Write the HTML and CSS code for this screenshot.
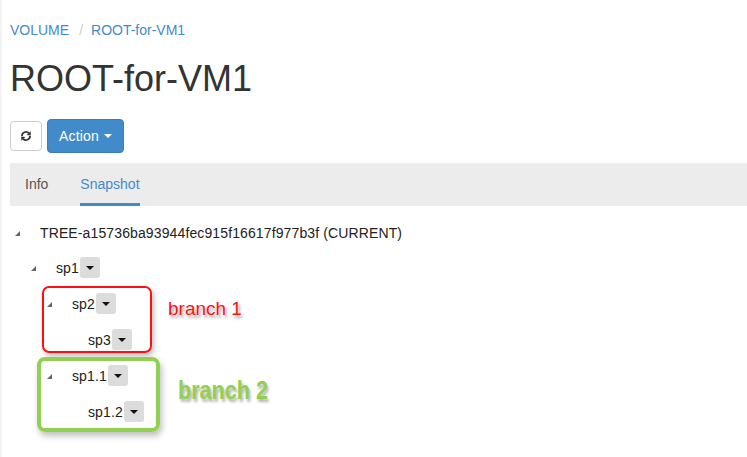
FILE: index.html
```html
<!DOCTYPE html>
<html>
<head>
<meta charset="utf-8">
<link rel="stylesheet" href="styles.css">
</head>
<body>
<div class="page">
  <ol class="breadcrumb">
    <li><a href="#">VOLUME</a></li>
    <li class="sep">/</li>
    <li><a href="#">ROOT-for-VM1</a></li>
  </ol>
  <h1 class="title">ROOT-for-VM1</h1>
  <div class="toolbar">
    <button class="btn btn-refresh" aria-label="refresh">
      <svg width="12" height="12" viewBox="0 0 16 16">
        <path d="M2.6 8 A5.4 5.4 0 0 1 11.9 4.3" fill="none" stroke="#333" stroke-width="2.4"/>
        <polygon points="14.2,1.6 14.4,7.2 8.8,6.6" fill="#333"/>
        <path d="M13.4 8 A5.4 5.4 0 0 1 4.1 11.7" fill="none" stroke="#333" stroke-width="2.4"/>
        <polygon points="1.8,14.4 1.6,8.8 7.2,9.4" fill="#333"/>
      </svg>
    </button>
    <button class="btn btn-action">Action <span class="caret caret-white"></span></button>
  </div>
  <div class="tabs">
    <a class="tab" href="#"><span>Info</span></a>
    <a class="tab active" href="#"><span>Snapshot</span></a>
  </div>
  <ul class="tree">
    <li>
      <div class="row row-root"><span class="toggler"><i></i></span><span class="label">TREE-a15736ba93944fec915f16617f977b3f (CURRENT)</span></div>
      <ul>
        <li>
          <div class="row"><span class="toggler"><i></i></span><span class="label">sp1</span><span class="drop"><span class="caret"></span></span></div>
          <ul>
            <li>
              <div class="row"><span class="toggler"><i></i></span><span class="label">sp2</span><span class="drop"><span class="caret"></span></span></div>
              <ul>
                <li><div class="row"><span class="toggler"></span><span class="label">sp3</span><span class="drop"><span class="caret"></span></span></div></li>
              </ul>
            </li>
            <li>
              <div class="row"><span class="toggler"><i></i></span><span class="label">sp1.1</span><span class="drop"><span class="caret"></span></span></div>
              <ul>
                <li><div class="row"><span class="toggler"></span><span class="label">sp1.2</span><span class="drop"><span class="caret"></span></span></div></li>
              </ul>
            </li>
          </ul>
        </li>
      </ul>
    </li>
  </ul>
</div>
<div class="note note-red"></div>
<div class="note-text note-text-red">branch 1</div>
<div class="note note-green"></div>
<div class="note-text note-text-green">branch 2</div>
</body>
</html>
```
FILE: styles.css
```css
html, body {
  margin: 0;
  padding: 0;
  background: #fff;
}
body {
  font-family: "Liberation Sans", Arial, sans-serif;
  font-size: 14px;
  color: #333;
  border-left: 2px solid #f3f3f3;
  min-height: 457px;
  box-sizing: border-box;
  overflow: hidden;
}
.page {
  padding: 0 0 0 8px;
}
.breadcrumb {
  list-style: none;
  margin: 20px 0 0 0;
  padding: 0;
  display: flex;
  line-height: 20px;
  font-size: 14px;
}
.breadcrumb a {
  color: #428bca;
  text-decoration: none;
}
.breadcrumb .sep {
  color: #ccc;
  padding: 0 8px 0 10px;
}
.title {
  font-size: 36px;
  font-weight: 400;
  line-height: 39.6px;
  margin: 19px 0 0 0;
  color: #333;
}
.toolbar {
  display: flex;
  align-items: center;
  gap: 5px;
  margin-top: 20px;
  height: 34px;
}
.btn {
  font-family: inherit;
  font-size: 14px;
  border-radius: 4px;
  cursor: pointer;
  display: inline-flex;
  align-items: center;
  justify-content: center;
  padding: 0;
  box-sizing: border-box;
}
.btn-refresh {
  width: 32px;
  height: 30px;
  background: #fff;
  border: 1px solid #ccc;
}
.btn-action {
  width: 77px;
  height: 34px;
  background: #428bca;
  border: 1px solid #357ebd;
  color: #fff;
  gap: 5px;
  letter-spacing: 0.2px;
}
.caret {
  display: inline-block;
  width: 0;
  height: 0;
  border-left: 4px solid transparent;
  border-right: 4px solid transparent;
  border-top: 4px solid #111;
}
.caret-white {
  border-top-color: #fff;
  margin-top: 1px;
}
.tabs {
  display: flex;
  margin-top: 10px;
  background: #ececec;
  height: 43px;
  width: 760px;
  padding-left: 0;
}
.tab {
  display: flex;
  align-items: stretch;
  padding: 0 15px;
  margin-right: 2px;
  text-decoration: none;
  color: #555;
}
.tab span {
  display: flex;
  align-items: center;
  border-bottom: 3px solid transparent;
  padding-top: 3px;
}
.tab.active {
  color: #428bca;
}
.tab.active span {
  border-bottom-color: #428bca;
}
.tree, .tree ul {
  list-style: none;
  margin: 0;
  padding: 0;
}
.tree {
  margin-top: 11px;
  padding-left: 5px;
}
.tree ul {
  padding-left: 16px;
}
.row {
  display: flex;
  align-items: center;
  height: 36px;
}
.row-root {
  height: 33px;
}
.toggler {
  width: 25px;
  flex: none;
  display: flex;
  align-items: center;
}
.toggler i {
  display: block;
  width: 0;
  height: 0;
  border-left: 5px solid transparent;
  border-bottom: 5px solid #666;
  margin-top: 1px;
}
.label {
  color: #222;
  letter-spacing: 0.12px;
}
.drop {
  width: 20px;
  height: 21px;
  background: #dcdcdc;
  border-radius: 3px;
  display: inline-flex;
  align-items: center;
  justify-content: center;
  margin-left: 1px;
}
.note {
  position: absolute;
  box-sizing: border-box;
}
.note-red {
  left: 42px;
  top: 286px;
  width: 110px;
  height: 67px;
  border: 2px solid #ff1010;
  border-radius: 7px;
  box-shadow: 2px 3px 5px rgba(0, 0, 0, 0.25);
}
.note-green {
  left: 37px;
  top: 357px;
  width: 123px;
  height: 75px;
  border: 4px solid #92d050;
  border-radius: 8px;
  box-shadow: 2px 4px 6px rgba(0, 0, 0, 0.25);
}
.note-text {
  position: absolute;
  white-space: nowrap;
}
.note-text-red {
  left: 168px;
  top: 298px;
  font-size: 19px;
  line-height: 22px;
  color: #ff1010;
  text-shadow: 0 0 1px #fff, 2px 3px 3px rgba(0, 0, 0, 0.35);
}
.note-text-green {
  left: 178px;
  top: 375px;
  font-size: 26px;
  line-height: 30px;
  font-weight: 700;
  color: #92d050;
  transform: scaleX(0.83);
  transform-origin: left center;
  text-shadow: 2px 3px 3px rgba(0, 0, 0, 0.3);
}
```
